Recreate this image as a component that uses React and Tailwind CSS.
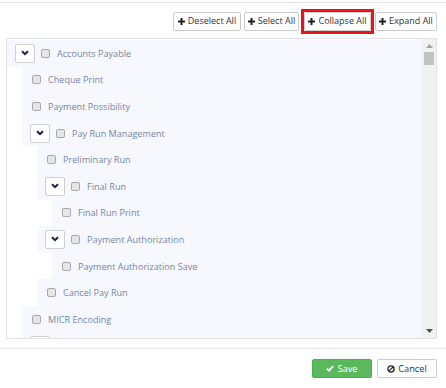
import React from "react";

const font = { fontFamily: '"Open Sans", "Liberation Sans", sans-serif' };

function Plus() {
  return (
    <svg width="7" height="7" viewBox="0 0 7 7" className="shrink-0">
      <rect x="2.5" y="0" width="2" height="7" fill="#222" />
      <rect x="0" y="2.5" width="7" height="2" fill="#222" />
    </svg>
  );
}

function Chevron() {
  return (
    <div className="w-[20px] h-[19px] shrink-0 bg-white border border-[#cfcfcf] rounded-[2px] flex items-center justify-center">
      <svg width="8" height="6" viewBox="0 0 8 6">
        <path d="M1 1.2 L4 4.2 L7 1.2" fill="none" stroke="#1b2440" strokeWidth="2" />
      </svg>
    </div>
  );
}

function Check() {
  return <div className="w-[9px] h-[9px] shrink-0 rounded-[2px] border border-[#a9a9a9] bg-[#e6e6e6]" />;
}

function Row({ label, chev }) {
  return (
    <div className={`h-[26.6px] flex items-center bg-[#f6f8fd] ${chev ? "pl-[8px]" : "pl-[10px]"}`}>
      {chev && <Chevron />}
      {chev && <div className="w-[6px] shrink-0" />}
      <Check />
      {label && (
        <span className="ml-[7px] text-[9.1px] leading-[12px] pt-[1px] text-[#7686a2] whitespace-nowrap">{label}</span>
      )}
    </div>
  );
}

function Btn({ children, w }) {
  return (
    <div className={`${w} h-[19px] flex items-center justify-center gap-[3px] bg-white border border-[#cccccc] rounded-[2px] text-[9px] text-[#333] whitespace-nowrap`}>
      <Plus />
      <span>{children}</span>
    </div>
  );
}

export default function App() {
  return (
    <div className="w-[446px] h-[388px] bg-white relative overflow-hidden" style={font}>
      <div className="h-[3px] border-b border-[#e5e5e5]" />
      <div className="mt-[6px] h-[24px] flex items-center justify-end pr-[9px]">
        <Btn w="w-[68px]">Deselect All</Btn>
        <div className="ml-[3px]">
          <Btn w="w-[55px]">Select All</Btn>
        </div>
        <div className="ml-[2px] border-[3px] border-[#e8141c]">
          <Btn w="w-[67px]">Collapse All</Btn>
        </div>
        <div className="ml-[1px]">
          <Btn w="w-[62px]">Expand All</Btn>
        </div>
      </div>
      <div className="mt-[5px] ml-[6px] mr-[9px] h-[301px] border border-[#e1e1e1] flex overflow-hidden">
        <div className="flex-1 overflow-hidden pt-[1px]">
          <ul>
            <li>
              <Row chev label="Accounts Payable" />
              <ul className="ml-[15px]">
                <li><Row label="Cheque Print" /></li>
                <li><Row label="Payment Possibility" /></li>
                <li>
                  <Row chev label="Pay Run Management" />
                  <ul className="ml-[15px]">
                    <li><Row label="Preliminary Run" /></li>
                    <li>
                      <Row chev label="Final Run" />
                      <ul className="ml-[15px]">
                        <li><Row label="Final Run Print" /></li>
                      </ul>
                    </li>
                    <li>
                      <Row chev label="Payment Authorization" />
                      <ul className="ml-[15px]">
                        <li><Row label="Payment Authorization Save" /></li>
                      </ul>
                    </li>
                    <li><Row label="Cancel Pay Run" /></li>
                  </ul>
                </li>
                <li><Row label="MICR Encoding" /></li>
                <li><Row chev /></li>
              </ul>
            </li>
          </ul>
        </div>
        <div className="w-[14px] shrink-0 bg-[#f1f1f1] flex flex-col items-center">
          <svg width="7" height="4" viewBox="0 0 7 4" className="mt-[5px]">
            <path d="M0 4 L3.5 0 L7 4 Z" fill="#a3a3a3" />
          </svg>
          <div className="mt-[4px] w-[10px] h-[13px] bg-[#c1c1c1]" />
          <div className="flex-1" />
          <svg width="7" height="4" viewBox="0 0 7 4" className="mb-[5px]">
            <path d="M0 0 L7 0 L3.5 4 Z" fill="#505050" />
          </svg>
        </div>
      </div>
      <div className="mt-[9px] border-t border-[#e5e5e5]" />
      <div className="mt-[10px] flex justify-end gap-[5px] pr-[9px]">
        <div className="w-[60px] h-[19px] flex items-center justify-center gap-[3px] bg-[#5cb85c] border border-[#4cae4c] rounded-[2px] text-[9.3px] text-white">
          <svg width="8" height="7" viewBox="0 0 8 7">
            <path d="M0.8 3.6 L3 5.7 L7.2 1" fill="none" stroke="#fff" strokeWidth="1.8" />
          </svg>
          <span>Save</span>
        </div>
        <div className="w-[60px] h-[19px] flex items-center justify-center gap-[3px] bg-white border border-[#cccccc] rounded-[2px] text-[9.3px] text-[#333]">
          <svg width="8" height="8" viewBox="0 0 8 8">
            <circle cx="4" cy="4" r="3.1" fill="none" stroke="#222" strokeWidth="1.3" />
            <path d="M1.9 6.1 L6.1 1.9" stroke="#222" strokeWidth="1.3" />
          </svg>
          <span>Cancel</span>
        </div>
      </div>
    </div>
  );
}
